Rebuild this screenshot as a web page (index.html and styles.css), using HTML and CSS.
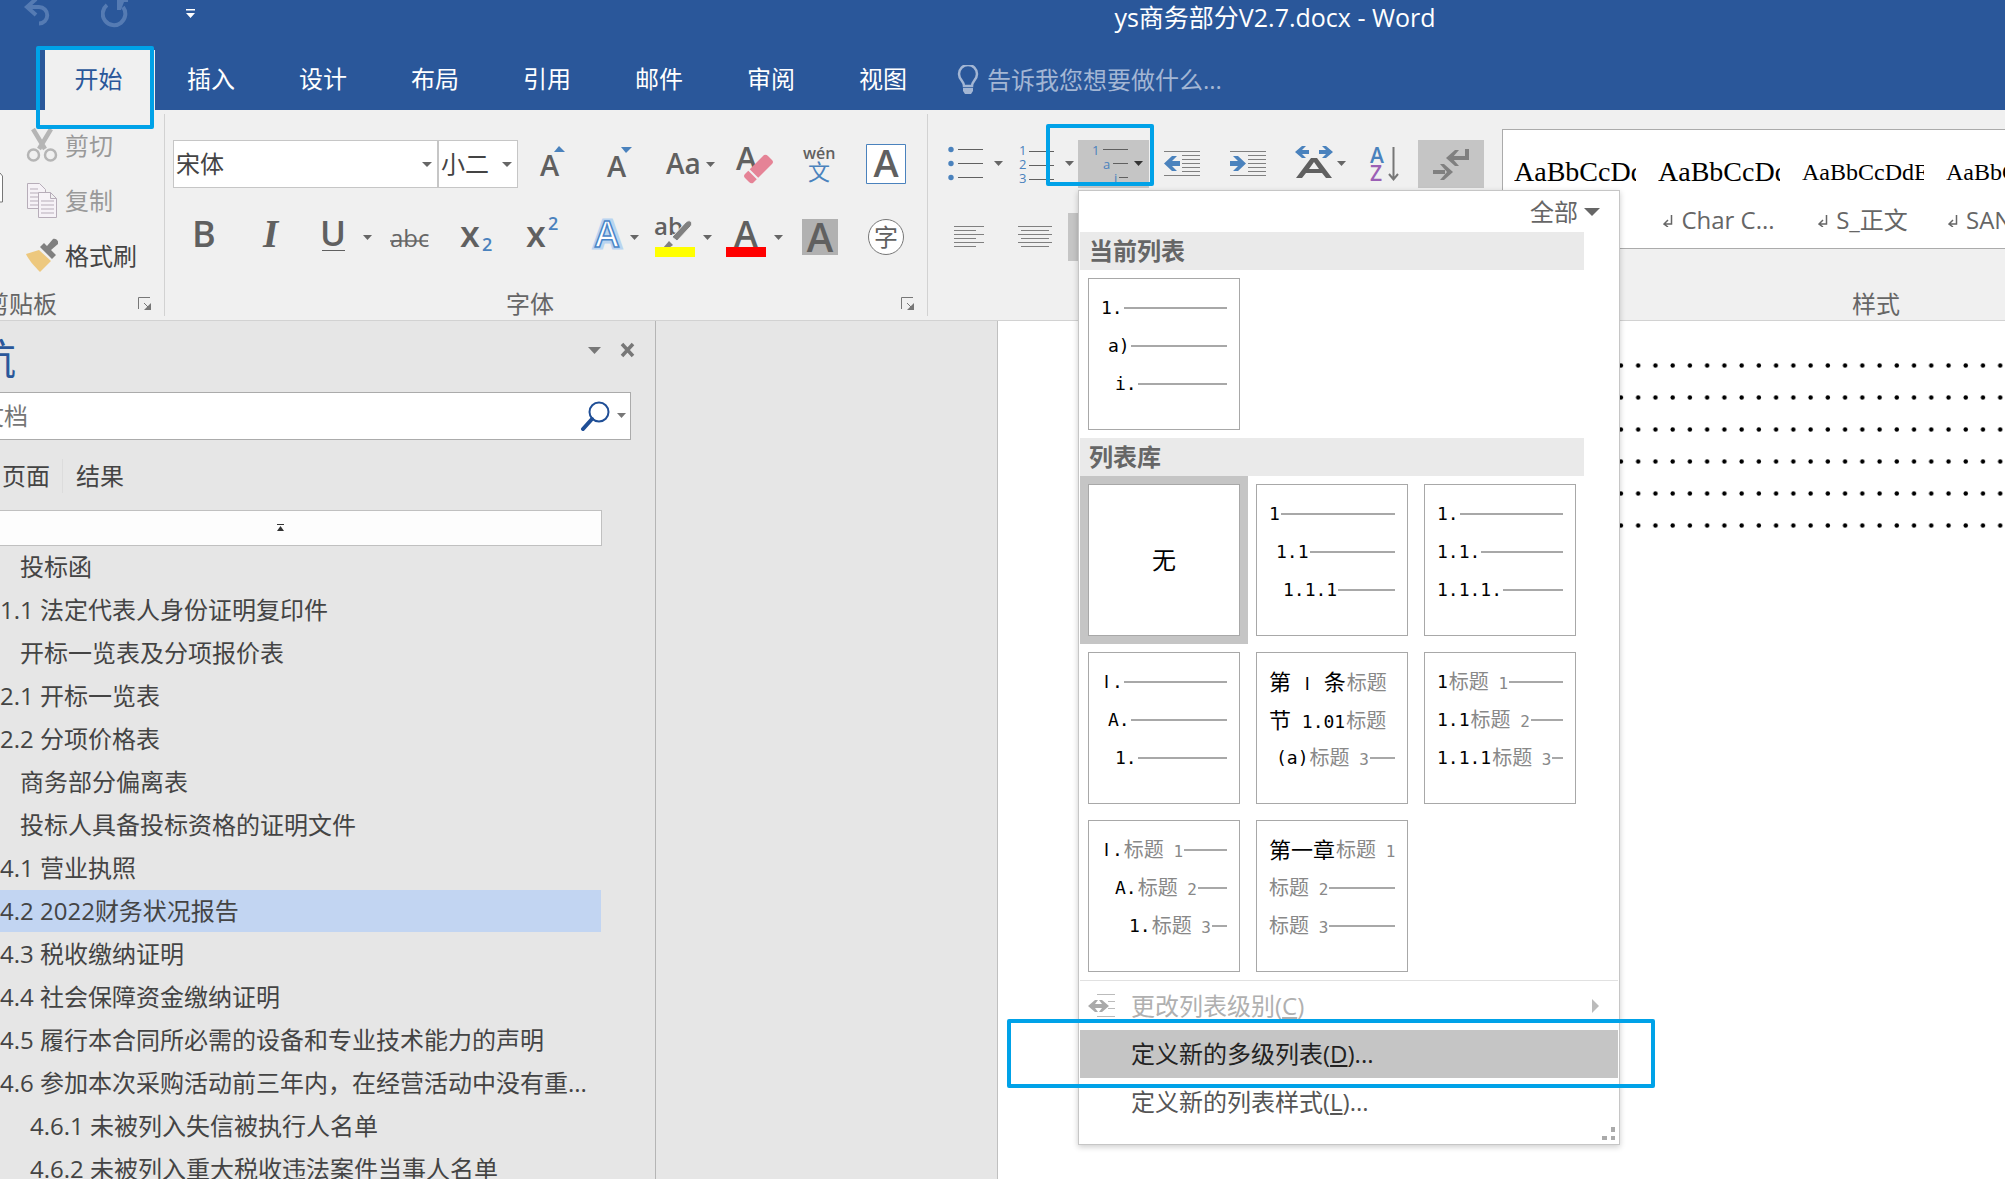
FILE: index.html
```
<!DOCTYPE html>
<html lang="zh-CN">
<head>
<meta charset="utf-8">
<title>ys商务部分V2.7.docx - Word</title>
<link rel="stylesheet" href="styles.css">
</head>
<body>
<header class="titlebar">
  <div class="quick">
    <button class="quick-btn" aria-label="撤消"><svg width="28" height="28" viewBox="0 0 28 28"><path d="M5 7h11a8 8 0 0 1 0 16.500M13-1L4 7l9 8" fill="none" stroke="#557bb3" stroke-width="4"/></svg></button>
    <button class="quick-btn" aria-label="重复"><svg width="28" height="28" viewBox="0 0 28 28"><path d="M6 5a11.300 11.300 0 1 0 16 2" fill="none" stroke="#557bb3" stroke-width="4"/><path d="M16-2h11v4h-4l-3 8h-4z" fill="#557bb3"/></svg></button>
    <button class="quick-btn quick-more" aria-label="自定义快速访问工具栏"><svg width="10" height="28" viewBox="0 0 10 28"><path d="M0 9h9v1.500H0zM0 13h9l-4.500 5z" fill="#fff"/></svg></button>
  </div>
  <h1 class="doc-title">ys商务部分V2.7.docx - Word</h1>
</header>
<nav class="tabs">
  <button class="tab active">开始<span class="mark mark-tab"></span></button>
  <button class="tab">插入</button>
  <button class="tab">设计</button>
  <button class="tab">布局</button>
  <button class="tab">引用</button>
  <button class="tab">邮件</button>
  <button class="tab">审阅</button>
  <button class="tab">视图</button>
  <label class="tell">
    <svg width="22" height="30" viewBox="0 0 22 30"><path d="M7 21c0-5-5-6-5-12a9 9 0 0 1 18 0c0 6-5 7-5 12z" fill="none" stroke="#a3b6d4" stroke-width="2.500"/><path d="M6 23h10v3l-2 3H8l-2-3z" fill="#a3b6d4"/></svg>
    <input type="text" placeholder="告诉我您想要做什么..." aria-label="告诉我您想要做什么">
  </label>
</nav>

<section class="ribbon">
  <div class="group clipboard">
    <svg class="paste" width="4" height="32" viewBox="0 0 4 32"><path d="M0 1L2.500 4v26H0" fill="#fff" stroke="#777"/></svg>
    <div class="clip-list">
      <button class="clip dim"><svg width="32" height="36" viewBox="0 0 32 36"><path d="M7 1l12 20M25 1L13 21" stroke="#b5b5b5" stroke-width="4.500" fill="none"/><circle cx="7.500" cy="27" r="5.500" fill="none" stroke="#b5b5b5" stroke-width="2.500"/><circle cx="24.500" cy="27" r="5.500" fill="none" stroke="#b5b5b5" stroke-width="2.500"/></svg>剪切</button>
      <button class="clip dim"><svg width="32" height="36" viewBox="0 0 32 36"><g fill="#f6f2f7" stroke="#b7adb9"><path d="M1.500.500h12l6 6v19h-18z"/><path d="M4 6h8M4 10h9M4 14h9M4 18h9M4 22h9"/><path d="M12.500 9.500h12l6 6v19h-18zM24.500 9.500v6h6"/><path d="M15 18h13M15 22h13M15 26h13M15 30h13"/></g></svg>复制</button>
      <button class="clip"><svg width="32" height="36" viewBox="0 0 32 36"><path d="M0 16l13-4 12 11-11 11C8 28 2 21 0 16z" fill="#edc87e"/><path d="M14 9l12 12 4-4-5-5 7-6c1-3-2-6-5-5l-6 7-3-3z" fill="#808080"/></svg>格式刷</button>
    </div>
    <div class="foot"><span class="foot-name clip-name">剪贴板</span><button class="launch" aria-label="剪贴板设置"><svg width="14" height="14" viewBox="0 0 14 14"><path d="M.500 12V.500H12M6 6l5 5" fill="none" stroke="#777"/><path d="M13 6v7H6z" fill="#777"/></svg></button></div>
  </div>

  <div class="group font">
    <div class="row">
      <label class="combo combo-font"><select aria-label="字体"><option>宋体</option></select></label>
      <label class="combo combo-size"><select aria-label="字号"><option>小二</option></select></label>
      <button class="tool" aria-label="增大字号"><svg width="67" height="48"><text class="g" x="22" y="36" font-size="29">A</text><path d="M36 12l5-6 6 6z" fill="#4a82bd"/></svg></button>
      <button class="tool" aria-label="减小字号"><svg width="67" height="48"><text class="g" x="22" y="37" font-size="29">A</text><path d="M36 7h11l-6 6z" fill="#4a82bd"/></svg></button>
      <button class="tool" aria-label="更改大小写"><svg width="72" height="48"><text class="g" x="14" y="34" font-size="28">Aa</text><path class="ar" d="M54 22h9l-4.500 5z"/></svg></button>
      <button class="tool" aria-label="清除格式"><svg width="62" height="48"><text class="g" x="12" y="30" font-size="32">A</text><path d="M21 34l19-19q2-1 4 1l4 4q2 2 0 4L29 43q-2 1-4-1l-4-4q-2-2 0-4z" fill="#e58396"/><path d="M24 29l10 10" stroke="#f0f0f0" stroke-width="2"/></svg></button>
      <button class="tool" aria-label="拼音指南"><svg width="66" height="48"><text class="g" x="17" y="19" font-size="16">wén</text><text class="cjk" x="22" y="40" font-size="22" fill="#4a82bd">文</text></svg></button>
      <button class="tool" aria-label="字符边框"><svg width="68" height="48"><path d="M14.500 4.500h39v39h-39z" fill="#fff" stroke="#4a82bd"/><text class="g" x="34" y="37" font-size="38" text-anchor="middle">A</text></svg></button>
    </div>
    <div class="row">
      <button class="tool" aria-label="加粗"><svg width="65" height="48"><text class="g" x="19" y="34" font-size="36" font-weight="700">B</text></svg></button>
      <button class="tool" aria-label="倾斜"><svg width="68" height="48"><text x="25" y="34" font-size="39" font-weight="700" font-style="italic" fill="#606060" font-family="Liberation Serif">I</text></svg></button>
      <button class="tool" aria-label="下划线"><svg width="74" height="48"><text class="g" x="14" y="33" font-size="35">U</text><path d="M16 37.500h23" stroke="#606060"/><path class="ar" d="M57 22h9l-4.500 5z"/></svg></button>
      <button class="tool" aria-label="删除线"><svg width="64" height="48"><text x="10" y="34" font-size="24" fill="#666">abc</text><path d="M10 28h38" stroke="#666" stroke-width="1.500"/></svg></button>
      <button class="tool" aria-label="下标"><svg width="66" height="48"><text class="g" x="16" y="34" font-size="36" font-weight="700">x</text><text class="b" x="38" y="38" font-size="18">2</text></svg></button>
      <button class="tool" aria-label="上标"><svg width="68" height="48"><text class="g" x="16" y="34" font-size="36" font-weight="700">x</text><text class="b" x="38" y="17" font-size="18">2</text></svg></button>
      <button class="tool" aria-label="文本效果"><svg width="70" height="48"><text class="halo" x="17" y="34" font-size="36" font-weight="700">A</text><text x="17" y="34" font-size="36" font-weight="600" fill="#fff" stroke="#4a86c8" stroke-width="1.500">A</text><path class="ar" d="M52 22h9l-4.500 5z"/></svg></button>
      <button class="tool" aria-label="突出显示颜色"><svg width="72" height="48"><text class="g" x="6" y="22" font-size="24" font-weight="400">ab</text><path d="M24 24L38 9c4-3 7 0 5 4L29 28z" fill="#808080" stroke="#f0f0f0"/><path d="M21 28l4 4-4 3h-6z" fill="#808080"/><path d="M7 34h40v10H7z" fill="#ff0"/><path class="ar" d="M55 22h9l-4.500 5z"/></svg></button>
      <button class="tool" aria-label="字体颜色"><svg width="70" height="48"><text class="g" x="26" y="34" font-size="36" text-anchor="middle">A</text><path d="M6 34h40v10H6z" fill="red"/><path class="ar" d="M54 22h9l-4.500 5z"/></svg></button>
      <button class="tool" aria-label="字符底纹"><svg width="62" height="48"><path d="M12 6h36v36H12z" fill="#b1b1b1"/><text class="g" x="30" y="39" font-size="40" text-anchor="middle">A</text></svg></button>
      <button class="tool" aria-label="带圈字符"><svg width="68" height="48"><circle cx="34" cy="24" r="17.500" fill="#fff" stroke="#777"/><text class="cjk" x="34" y="33" font-size="24" text-anchor="middle" fill="#606060">字</text></svg></button>
    </div>
    <div class="foot"><span class="foot-name">字体</span><button class="launch" aria-label="字体设置"><svg width="14" height="14" viewBox="0 0 14 14"><path d="M.500 12V.500H12M6 6l5 5" fill="none" stroke="#777"/><path d="M13 6v7H6z" fill="#777"/></svg></button></div>
  </div>

  <div class="group para">
    <div class="row">
      <button class="tool" aria-label="项目符号"><svg width="82" height="48"><g fill="#4a82bd"><circle cx="23" cy="9.500" r="2.700"/><circle cx="23" cy="23.500" r="2.700"/><circle cx="23" cy="37.500" r="2.700"/></g><path class="ln" d="M30 9.500h25M30 23.500h25M30 37.500h25"/><path class="ar" d="M66 21h9l-4.500 5z"/></svg></button>
      <button class="tool" aria-label="编号"><svg width="68" height="48"><g class="num"><text x="9" y="15">1</text><text x="9" y="29">2</text><text x="9" y="43">3</text></g><path class="ln" d="M19 11.500h25M19 25.500h25M19 39.500h25"/><path class="ar" d="M55 21h9l-4.500 5z"/></svg></button>
      <div class="drop">
        <button class="tool on" aria-label="多级列表"><svg width="71" height="48"><g class="num"><text x="14" y="15">1</text><text x="25" y="29">a</text><text x="36" y="43">i</text></g><path class="ln" d="M25 9.500h25M35 23.500h15M41 37.500h9"/><path d="M56 21h9l-4.500 5z" fill="#333"/></svg></button>
        <span class="mark mark-list"></span>
        <div class="menu">
          <button class="filter">全部<span class="tri"></span></button>
          <h2>当前列表</h2>
          <div class="tiles">
            <button class="tile"><span class="lv"><b>1.</b><hr></span><span class="lv in1"><b>a)</b><hr></span><span class="lv in2"><b>i.</b><hr></span></button>
          </div>
          <h2>列表库</h2>
          <div class="tiles">
            <button class="tile none picked">无</button>
            <button class="tile"><span class="lv"><b>1</b><hr></span><span class="lv in1"><b>1.1</b><hr></span><span class="lv in2"><b>1.1.1</b><hr></span></button>
            <button class="tile"><span class="lv"><b>1.</b><hr></span><span class="lv"><b>1.1.</b><hr></span><span class="lv"><b>1.1.1.</b><hr></span></button>
            <button class="tile"><span class="lv"><b><span class="roman">I</span>.</b><hr></span><span class="lv in1"><b>A.</b><hr></span><span class="lv in2"><b>1.</b><hr></span></button>
            <button class="tile"><span class="lv"><b><i>第</i> <span class="roman">I</span> <i>条</i></b><em>标题</em></span><span class="lv"><b><i>节</i> 1.01</b><em>标题</em></span><span class="lv in1"><b>(a)</b><em>标题<s> 3</s></em><hr></span></button>
            <button class="tile"><span class="lv"><b>1</b><em>标题<s> 1</s></em><hr></span><span class="lv"><b>1.1</b><em>标题<s> 2</s></em><hr></span><span class="lv"><b>1.1.1</b><em>标题<s> 3</s></em><hr></span></button>
            <button class="tile"><span class="lv"><b><span class="roman">I</span>.</b><em>标题<s> 1</s></em><hr></span><span class="lv in2"><b>A.</b><em>标题<s> 2</s></em><hr></span><span class="lv in4"><b>1.</b><em>标题<s> 3</s></em><hr></span></button>
            <button class="tile"><span class="lv"><b><i>第一章</i></b><em>标题<s> 1</s></em><hr></span><span class="lv"><em>标题<s> 2</s></em><hr></span><span class="lv"><em>标题<s> 3</s></em><hr></span></button>
          </div>
          <div class="commands">
            <button class="cmd" disabled><svg width="28" height="24" viewBox="0 0 28 24"><path d="M9 .500h18M20 7.500h7M20 14.500h7M9 22.500h18" stroke="#bbb"/><path d="M0 12l7-6h3l-3 4h7l-3-4h3l7 6-7 6h-3l3-4H7l3 4H7z" fill="#aaa"/></svg><span>更改列表级别(<u>C</u>)</span><svg class="sub" width="8" height="16" viewBox="0 0 8 16"><path d="M0 1l7 7-7 7z" fill="#bbb"/></svg></button>
            <button class="cmd hot"><span>定义新的多级列表(<u>D</u>)...</span><span class="mark mark-cmd"></span></button>
            <button class="cmd"><span>定义新的列表样式(<u>L</u>)...</span></button>
          </div>
          <svg class="grip" width="14" height="14" viewBox="0 0 14 14"><path d="M9 0h4v5H9zM0 9h5v4H0zM9 9h4v4H9z" fill="#aaa"/></svg>
        </div>
      </div>
      <button class="tool" aria-label="减少缩进量"><svg width="66" height="48"><path class="ln lt" d="M15 11.500h36M33 15.500h18M33 19.500h18M33 23.500h18M33 27.500h18M33 31.500h18M15 35.500h36"/><path d="M15 23.500l8-7.500h5l-5 5h8v5h-8l5 5h-5z" fill="#4a82bd"/></svg></button>
      <button class="tool" aria-label="增加缩进量"><svg width="67" height="48"><path class="ln lt" d="M15 11.500h36M33 15.500h18M33 19.500h18M33 23.500h18M33 27.500h18M33 31.500h18M15 35.500h36"/><path d="M31 23.500l-8-7.500h-5l5 5h-8v5h8l-5 5h5z" fill="#4a82bd"/></svg></button>
      <button class="tool" aria-label="中文版式"><svg width="72" height="48"><path d="M13 12l7-6h4l-4 4h7v4h-7l4 4h-4zM51 12l-7-6h-4l4 4h-7v4h7l-4 4h4z" fill="#4a82bd"/><path d="M14 38l15-20h6l15 20h-6l-4-5H24l-4 5zM27 29h10l-5-7z" fill="#606060" fill-rule="evenodd"/><path class="ar" d="M55 21h9l-4.500 5z"/></svg></button>
      <button class="tool" aria-label="排序"><svg width="64" height="48"><text class="b" x="16" y="23" font-size="21">A</text><text x="16" y="41" font-size="21" font-weight="600" fill="#9b5fb5">Z</text><path d="M39.500 7v32M35 34l4.500 5.500L44 34" fill="none" stroke="#777" stroke-width="2"/></svg></button>
      <button class="tool on" aria-label="显示编辑标记"><svg width="66" height="48"><path d="M49 9v9H31" fill="none" stroke="#808080" stroke-width="4"/><path d="M28 18l9-8h4l-7 8 7 8h-4zM15 30h12v4H15zM35 32l-9-8h-4l7 8-7 8h4z" fill="#808080"/></svg></button>
    </div>
    <div class="row">
      <button class="tool" aria-label="左对齐"><svg width="82" height="48"><path class="ln lt" d="M26 13.500h30M26 17.500h22M26 21.500h30M26 25.500h22M26 29.500h30M26 33.500h22"/></svg></button>
      <button class="tool" aria-label="居中"><svg width="58" height="48"><path class="ln lt" d="M8 13.500h34M11 17.500h28M8 21.500h34M11 25.500h28M8 29.500h34M11 33.500h28"/></svg></button>
      <button class="tool on" aria-label="两端对齐"><svg width="62" height="48"><path class="ln lt" d="M16 13.500h30M16 17.500h30M16 21.500h30M16 25.500h30M16 29.500h30M16 33.500h30"/></svg></button>
    </div>
  </div>

  <div class="group styles">
    <div class="gallery">
      <button class="style"><span class="sample">AaBbCcDdEe</span><span class="name"></span></button>
      <button class="style"><span class="sample">AaBbCcDdEe</span><span class="name"><svg class="ret" width="10" height="14" viewBox="0 0 10 14"><path d="M8.500 2v9H1M5 7L1 11l4 3" fill="none" stroke="#666" stroke-width="1.500"/></svg>Char C...</span></button>
      <button class="style"><span class="sample narrow">AaBbCcDdEe</span><span class="name"><svg class="ret" width="10" height="14" viewBox="0 0 10 14"><path d="M8.500 2v9H1M5 7L1 11l4 3" fill="none" stroke="#666" stroke-width="1.500"/></svg>S_正文</span></button>
      <button class="style"><span class="sample narrow">AaBbCcDdEe</span><span class="name long"><svg class="ret" width="10" height="14" viewBox="0 0 10 14"><path d="M8.500 2v9H1M5 7L1 11l4 3" fill="none" stroke="#666" stroke-width="1.500"/></svg>SAN...</span></button>
    </div>
    <div class="foot"><span class="foot-name">样式</span></div>
  </div>
</section>

<main class="work">
  <aside class="pane">
    <div class="pane-head">
      <h2 class="pane-title">导航</h2>
      <button class="icon" aria-label="任务窗格选项"><svg width="14" height="16" viewBox="0 0 14 16"><path d="M0 5h13l-6.500 7z" fill="#777"/></svg></button>
      <button class="icon" aria-label="关闭"><svg width="16" height="16" viewBox="0 0 16 16"><path d="M2 2l11 12M13 2L2 14" stroke="#777" stroke-width="3.500"/></svg></button>
    </div>
    <div class="search">
      <input type="text" placeholder="搜索文档" aria-label="搜索文档">
      <svg width="48" height="30" viewBox="0 0 48 30"><circle cx="19" cy="11" r="9.500" fill="none" stroke="#1f4e96" stroke-width="2"/><path d="M12 18L3 28" stroke="#1f4e96" stroke-width="4" stroke-linecap="round"/><path d="M37 12h9l-4.500 5z" fill="#777"/></svg>
    </div>
    <div class="pane-tabs"><button>页面</button><button>结果</button></div>
    <button class="totop" aria-label="跳转到开头"><svg width="8" height="8" viewBox="0 0 8 8"><path d="M0 0h7v1H0zM3.500 2L7 7H0z" fill="#333"/></svg></button>
    <ul class="outline">
      <li class="l1"><a href="#">投标函</a></li>
      <li><a href="#">1.1 法定代表人身份证明复印件</a></li>
      <li class="l1"><a href="#">开标一览表及分项报价表</a></li>
      <li><a href="#">2.1 开标一览表</a></li>
      <li><a href="#">2.2 分项价格表</a></li>
      <li class="l1"><a href="#">商务部分偏离表</a></li>
      <li class="l1"><a href="#">投标人具备投标资格的证明文件</a></li>
      <li><a href="#">4.1 营业执照</a></li>
      <li class="current"><a href="#">4.2 2022财务状况报告</a></li>
      <li><a href="#">4.3 税收缴纳证明</a></li>
      <li><a href="#">4.4 社会保障资金缴纳证明</a></li>
      <li><a href="#">4.5 履行本合同所必需的设备和专业技术能力的声明</a></li>
      <li><a href="#">4.6 参加本次采购活动前三年内，在经营活动中没有重...</a></li>
      <li class="l3"><a href="#">4.6.1 未被列入失信被执行人名单</a></li>
      <li class="l3"><a href="#">4.6.2 未被列入重大税收违法案件当事人名单</a></li>
    </ul>
  </aside>
  <div class="canvas">
    <article class="page">
      <svg class="leaders" width="100%" height="192"><defs><pattern id="dot" width="17.240" height="32" patternUnits="userSpaceOnUse"><circle cx="8.400" cy="16.500" r="2.200"/></pattern></defs><rect width="100%" height="192" fill="url(#dot)"/></svg>
    </article>
  </div>
</main>
</body>
</html>
```
FILE: styles.css
```
* { box-sizing: border-box; }

body {
  margin: 0;
  height: 100vh;
  overflow: hidden;
  display: flex;
  flex-direction: column;
  font: 24px/32px "Open Sans", "Noto Sans CJK SC", sans-serif;
  color: #444;
  background: #e6e6e6;
}

button, input, select {
  font: inherit;
  color: inherit;
  background: none;
  border: 0;
  padding: 0;
  margin: 0;
  border-radius: 0;
}

svg { display: block; flex: none; }
h1, h2, ul { margin: 0; padding: 0; font-weight: 400; font-size: 24px; }

/* title bar and tabs */
.titlebar {
  flex: none;
  height: 50px;
  display: grid;
  grid-template-columns: 545px 1fr;
  background: #2a579a;
  color: #fff;
}
.quick { display: flex; padding-left: 23px; height: 28px; }
.quick-btn { width: 78px; }
.quick-more { padding-left: 7px; }
.doc-title { justify-self: center; font-size: 25px; line-height: 34px; }

.tabs {
  flex: none;
  height: 60px;
  display: flex;
  padding-left: 43px;
  background: #2a579a;
  color: #fff;
}
.tab { width: 112px; padding-bottom: 2px; }
.tab.active {
  position: relative;
  width: 110px;
  margin-left: 2px;
  padding-right: 3px;
  background: #f0f0f0;
  color: #2a579a;
}
.tell { display: flex; align-items: center; gap: 8px; margin-left: 18px; color: #a3b6d4; }
.tell input { width: 300px; }
.tell input::placeholder { color: #a3b6d4; opacity: 1; }

/* highlight frames */
.mark {
  position: absolute;
  z-index: 5;
  border: 4px solid #00a2e8;
  border-radius: 2px;
  pointer-events: none;
}
.mark-tab { left: -9px; right: 1px; top: -4px; bottom: -19px; }
.mark-list { left: -32px; right: -5px; top: -16px; bottom: 2px; }
.mark-cmd { left: -73px; right: -37px; top: -11px; bottom: -10px; }

/* ribbon */
.ribbon {
  flex: none;
  height: 211px;
  display: flex;
  background: #f0f0f0;
  border-bottom: 1px solid #d2d2d2;
}
.group { flex: none; display: flex; flex-direction: column; position: relative; padding-top: 30px; }
.group + .group::before {
  content: "";
  position: absolute;
  left: -1px;
  top: 4px;
  bottom: 4px;
  width: 1px;
  background: #d2d2d2;
}
.clipboard { width: 165px; padding-top: 8px; }
.font { width: 763px; padding-left: 8px; }
.para { width: 565px; }
.styles { flex: 1; min-width: 0; overflow: hidden; padding: 19px 0 0 9px; }

.paste { position: absolute; left: 0; top: 62px; }
.clip-list { padding-left: 26px; }
.clip { display: flex; align-items: center; gap: 7px; height: 55px; white-space: nowrap; }
.clip.dim { color: #999; }

.row { display: flex; height: 48px; margin-bottom: 25px; }
.tool { height: 48px; flex: none; }
.tool.on { background: #c5c5c5; }
.g { fill: #606060; font-weight: 600; }
.b { fill: #4a82bd; font-weight: 600; }
.cjk { font-family: "Noto Sans CJK SC", sans-serif; }
.ar { fill: #666; }
.ln { stroke: #606060; fill: none; }
.lt { stroke: #808080; }
.num { fill: #4a82bd; font-size: 13px; }
.halo { fill: #8ab6e6; stroke: #b9d4f0; stroke-width: 5px; }

.combo { position: relative; height: 48px; border: 1px solid #c6c6c6; background: #fff; }
.combo-font { width: 265px; }
.combo-size { width: 80px; }
.combo select { appearance: none; width: 100%; height: 46px; padding-left: 2px; }
.combo::after, .tri {
  content: "";
  border: 5px solid transparent;
  border-top-color: #666;
  border-bottom: 0;
}
.combo::after { position: absolute; right: 5px; top: 21px; }

.foot { position: absolute; left: 0; right: 0; bottom: 0; display: flex; height: 32px; color: #666; }
.foot-name { flex: 1; text-align: center; }
.clip-name { text-indent: -15px; text-align: left; }
.launch { width: 14px; margin-right: 13px; }
.font .foot-name { padding-right: 6px; }
.styles .foot { right: auto; width: 766px; }

.gallery {
  display: flex;
  width: 766px;
  height: 120px;
  border: 1px solid #ababab;
  background: #fff;
}
.style { flex: none; width: 144px; padding: 20px 11px 0; text-align: left; align-self: flex-start; }
.sample {
  display: block;
  overflow: hidden;
  font: 28px/44px "Liberation Serif", serif;
  color: #000;
}
.sample.narrow { font-size: 24px; }
.name { display: flex; justify-content: center; align-items: center; gap: 8px; height: 52px; color: #666; white-space: nowrap; }
.name.long { justify-content: flex-start; padding-left: 2px; }

/* multilevel list menu */
.drop { position: relative; }
.menu {
  position: absolute;
  z-index: 4;
  left: 0;
  top: 50px;
  width: 542px;
  padding: 1px;
  background: #fff;
  border: 1px solid #c6c6c6;
  box-shadow: 0 2px 6px rgba(0, 0, 0, .2);
}
.filter { display: flex; align-items: center; gap: 6px; height: 40px; margin-left: auto; margin-right: 18px; color: #666; }
.tri { border-width: 8px 8px 0; }
.menu h2 { width: 504px; height: 38px; padding-left: 9px; line-height: 38px; font-weight: 700; color: #666; background: #eaeaea; }
.tiles { display: flex; flex-wrap: wrap; gap: 16px; padding: 8px; }
.tile {
  width: 152px;
  height: 152px;
  padding: 10px 12px 26px;
  border: 1px solid #a8a8a8;
  background: #fff;
  color: #000;
  display: flex;
  flex-direction: column;
  text-align: left;
}
.tile.none { align-items: center; justify-content: center; padding: 0; }
.tile.picked { box-shadow: 0 0 0 8px #c5c5c5; }
.lv { display: flex; align-items: center; gap: 1px; width: 100%; height: 38px; overflow: hidden; white-space: pre; }
.lv b { font: 18px/38px "DejaVu Sans Mono", monospace; }
.lv i { font: 22px/38px "Noto Sans CJK SC", sans-serif; }
.lv em { font: 20px/38px "Noto Sans CJK SC", sans-serif; color: #888; }
.lv s { font: 16px/38px "DejaVu Sans Mono", monospace; text-decoration: none; }
.lv hr { flex: 1; margin: 0; border: 0; height: 2px; background: #a8a8a8; }
.roman { display: inline-block; width: 11px; text-align: center; font-family: "Liberation Sans", sans-serif; }
.in1 { padding-left: 7px; }
.in2 { padding-left: 14px; }
.in4 { padding-left: 28px; }

.commands { border-top: 1px solid #e1e1e1; padding-top: 1px; }
.cmd { position: relative; display: flex; align-items: center; width: 100%; height: 48px; padding-left: 51px; color: #555; }
.cmd:disabled { padding-left: 8px; gap: 15px; color: #b0b0b0; }
.cmd.hot { background: #c5c5c5; color: #222; }
.sub { margin-left: auto; margin-right: 18px; }
.grip { margin: 1px 2px 2px auto; }

/* workspace */
.work { flex: 1; min-height: 0; display: flex; overflow: hidden; }
.pane { flex: none; width: 656px; border-right: 1px solid #b5b5b5; overflow: hidden; }
.pane-head { display: flex; height: 71px; padding-right: 19px; gap: 18px; }
.pane-title { flex: 1; margin-left: -68px; font-size: 42px; line-height: 76px; color: #2a579a; }
.icon { height: 16px; margin-top: 21px; }
.search {
  display: flex;
  align-items: center;
  width: 631px;
  height: 48px;
  border: 1px solid #ababab;
  border-left: 0;
  background: #fff;
}
.search input { flex: 1; margin-left: -68px; }
.search input::placeholder { color: #767676; opacity: 1; }
.search svg { margin-right: 2px; }
.pane-tabs { display: flex; padding: 19px 0 17px 2px; }
.pane-tabs button { height: 34px; padding-right: 12px; }
.pane-tabs button + button { padding-left: 13px; border-left: 1px solid #dcdcdc; }
.totop { display: flex; align-items: center; width: 602px; height: 36px; padding-left: 277px; background: #fdfdfd; border: 1px solid #c0c0c0; border-left: 0; }
.outline { list-style: none; width: 601px; }
.outline li { height: 43px; line-height: 41px; white-space: nowrap; border-bottom: 1px solid #e6e6e6; }
.outline a { color: #444; text-decoration: none; }
.outline .l1 { padding-left: 20px; }
.outline .l3 { padding-left: 30px; }
.outline .current { background: #c2d5f2; }

.canvas { flex: 1; min-width: 0; padding-left: 341px; }
.page { height: 100%; padding: 28px 0 0 287px; background: #fff; border-left: 1px solid #c0c0c0; }
```
